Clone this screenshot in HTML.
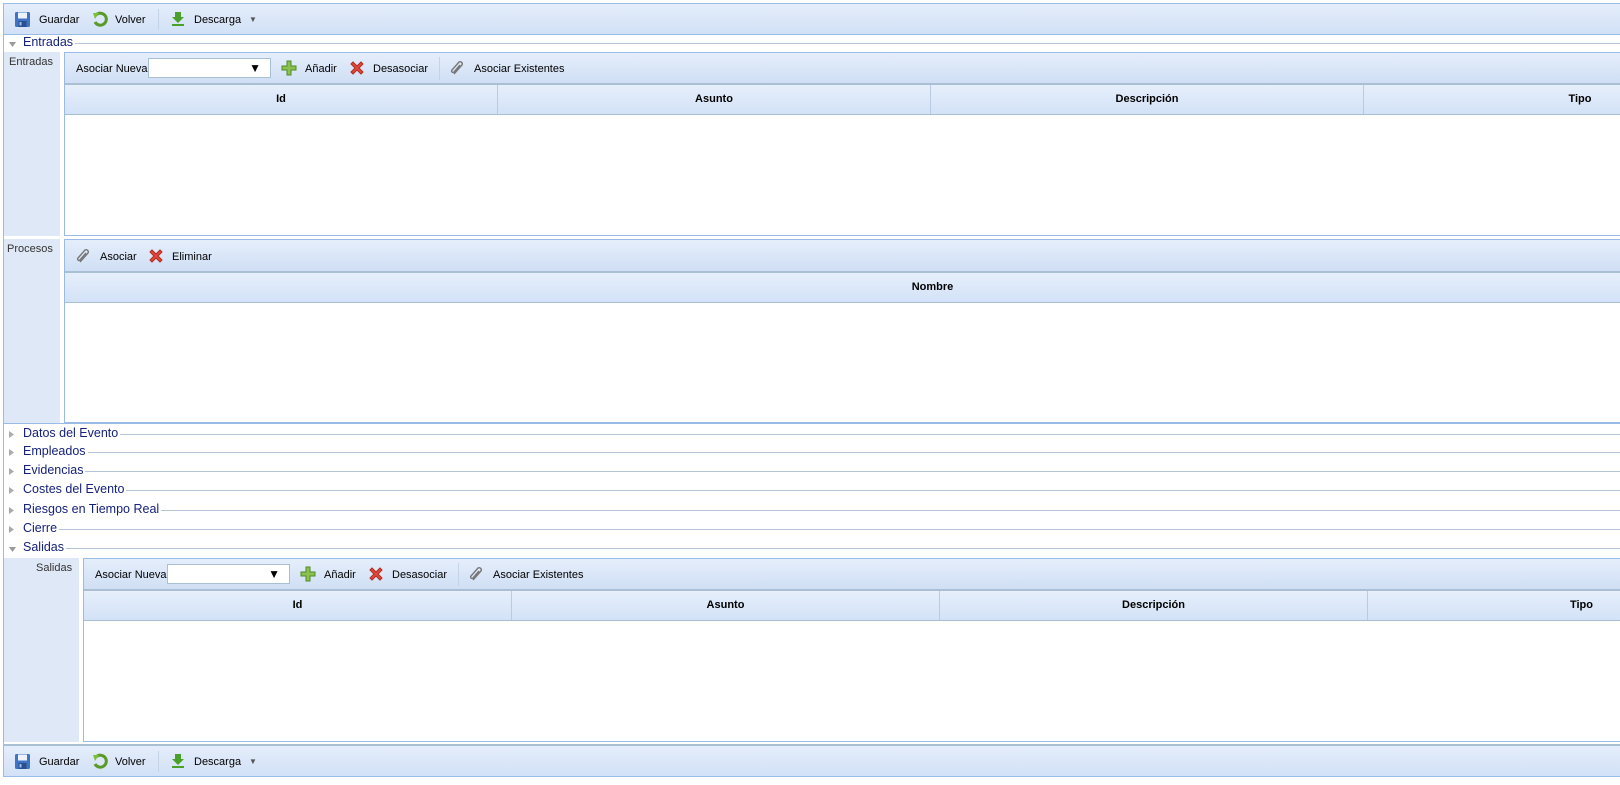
<!DOCTYPE html>
<html><head><meta charset="utf-8">
<style>
*{box-sizing:border-box;margin:0;padding:0}
body{width:1620px;height:785px;background:#fff;font-family:"Liberation Sans",sans-serif;font-size:11px;color:#000;position:relative;overflow:hidden}
.abs{position:absolute}
.tb{background:linear-gradient(#e4edfa,#d2e1f7);border:1px solid #99bbe8}
.mtb{background:linear-gradient(#e5eefb,#d0dff5);border-bottom:1px solid #a9bfd3}
.lbl{position:absolute;white-space:nowrap;line-height:14px}
.sep{position:absolute;width:1px;background:#c5d3e6}
.hdr{position:absolute;background:linear-gradient(#e6effb,#d3e2f7);border-top:1px solid #a9bfd3;border-bottom:1px solid #a9bfd3}
.col{position:absolute;top:0;bottom:0;border-right:1px solid #b8cbe3;text-align:center;font-weight:bold;font-size:11px;line-height:29px}
.sec{position:absolute;left:4px;right:0;height:15px}
.sec .t{position:absolute;left:19px;top:0;color:#15227b;font-size:12.5px;line-height:15px;background:#fff;padding-right:2px}
.sec .ln{position:absolute;left:19px;right:0;top:8px;border-top:1px solid #b5c6d9}
.sec .ar{position:absolute;left:4px;top:4px}
.combo{position:absolute;height:20px;background:#fff;border:1px solid #a9bfd3}
.combo span{position:absolute;right:9px;top:2px;font-size:12px}
.side{position:absolute;background:#dfe8f6}
.panel{position:absolute;border:1px solid #99bbe8;background:#fff;right:-2px}
</style></head><body>

<svg width="0" height="0" style="position:absolute">
<defs>
<g id="save"><rect x="1" y="1" width="15" height="15" rx="1.5" fill="#3f74c4"/><rect x="4" y="1.5" width="9" height="6" fill="#eef3fb"/><rect x="4.5" y="10" width="8" height="6" fill="#2a4f8e"/><rect x="5.5" y="11" width="2" height="3.5" fill="#9fbbe6"/></g>
<g id="back"><path d="M4 4 A6 6 0 1 1 3 11" fill="none" stroke="#5a9a2a" stroke-width="3"/><path d="M1 2 L7 2 L3 8 Z" fill="#7bbf3a"/></g>
<g id="down"><path d="M5 1h6v5h3l-6 6-6-6h3z" fill="#4aa12a"/><rect x="2" y="13" width="12" height="2" fill="#4aa12a"/></g>
<g id="plus"><path d="M6 1h4v5h5v4h-5v5H6v-5H1V6h5z" fill="#8cc152" stroke="#4e8a22" stroke-width="1"/></g>
<g id="del"><path d="M2 4 L4 2 L8 6 L12 2 L14 4 L10 8 L14 12 L12 14 L8 10 L4 14 L2 12 L6 8 Z" fill="#e04a3a" stroke="#b22a1e" stroke-width="1"/></g>
<g id="clip"><path d="M5 14 L13 5 A2.2 2.2 0 0 0 10 2 L3 10 A1.4 1.4 0 0 0 5 12 L11 5" fill="none" stroke="#777" stroke-width="1.4"/></g>
</defs></svg>

<!-- top toolbar -->
<div class="abs tb" style="left:3px;top:3px;right:-2px;height:32px">
 <svg class="abs" style="left:10px;top:7px" width="17" height="17"><use href="#save"/></svg>
 <div class="lbl" style="left:35px;top:9px">Guardar</div>
 <svg class="abs" style="left:88px;top:7px" width="16" height="16"><use href="#back"/></svg>
 <div class="lbl" style="left:111px;top:9px">Volver</div>
 <div class="sep" style="left:154px;top:5px;height:21px"></div>
 <svg class="abs" style="left:166px;top:7px" width="16" height="16"><use href="#down"/></svg>
 <div class="lbl" style="left:190px;top:9px">Descarga</div>
 <div class="lbl" style="left:245px;top:9px;color:#555;font-size:8px">▼</div>
</div>

<div class="abs" style="left:3px;top:35px;width:1px;height:710px;background:#99bbe8"></div>

<div class="sec" style="top:35px"><span class="ar"><svg width="9" height="7"><path d="M1 1h7l-3.5 5z" fill="#999"/></svg></span><div class="ln"></div><div class="t">Entradas</div></div>

<div class="side" style="left:4px;top:52px;width:56px;height:184px"></div>
<div class="lbl" style="left:9px;top:55px;color:#333">Entradas</div>
<div class="panel" style="left:64px;top:52px;height:184px">
 <div class="mtb abs" style="left:0;right:0;top:0;height:31px">
  <div class="lbl" style="left:11px;top:9px">Asociar Nueva</div>
  <div class="combo" style="left:83px;top:5px;width:123px"><span>▼</span></div>
  <svg class="abs" style="left:216px;top:7px" width="16" height="16"><use href="#plus"/></svg>
  <div class="lbl" style="left:240px;top:9px">Añadir</div>
  <svg class="abs" style="left:284px;top:7px" width="16" height="16"><use href="#del"/></svg>
  <div class="lbl" style="left:308px;top:9px">Desasociar</div>
  <div class="sep" style="left:374px;top:4px;height:23px"></div>
  <svg class="abs" style="left:384px;top:7px" width="16" height="16"><use href="#clip"/></svg>
  <div class="lbl" style="left:409px;top:9px">Asociar Existentes</div>
 </div>
 <div class="hdr" style="left:0;right:0;top:31px;height:31px">
  <div class="col" style="left:0;width:433px">Id</div>
  <div class="col" style="left:433px;width:433px">Asunto</div>
  <div class="col" style="left:866px;width:433px">Descripción</div>
  <div class="col" style="left:1299px;width:433px">Tipo</div>
 </div>
</div>

<div class="side" style="left:4px;top:239px;width:56px;height:184px"></div>
<div class="lbl" style="left:7px;top:242px;color:#333">Procesos</div>
<div class="panel" style="left:64px;top:239px;height:184px">
 <div class="mtb abs" style="left:0;right:0;top:0;height:32px">
  <svg class="abs" style="left:10px;top:8px" width="16" height="16"><use href="#clip"/></svg>
  <div class="lbl" style="left:35px;top:10px">Asociar</div>
  <svg class="abs" style="left:83px;top:8px" width="16" height="16"><use href="#del"/></svg>
  <div class="lbl" style="left:107px;top:10px">Eliminar</div>
 </div>
 <div class="hdr" style="left:0;right:0;top:32px;height:31px">
  <div class="col" style="left:0;width:1735px;border:none">Nombre</div>
 </div>
</div>
<div class="abs" style="left:3px;top:423px;right:0;height:1px;background:#99bbe8"></div>

<div class="sec" style="top:426px"><span class="ar"><svg width="7" height="9"><path d="M1 1v7l5-3.5z" fill="#aaa"/></svg></span><div class="ln"></div><div class="t">Datos del Evento</div></div>
<div class="sec" style="top:444px"><span class="ar"><svg width="7" height="9"><path d="M1 1v7l5-3.5z" fill="#aaa"/></svg></span><div class="ln"></div><div class="t">Empleados</div></div>
<div class="sec" style="top:463px"><span class="ar"><svg width="7" height="9"><path d="M1 1v7l5-3.5z" fill="#aaa"/></svg></span><div class="ln"></div><div class="t">Evidencias</div></div>
<div class="sec" style="top:482px"><span class="ar"><svg width="7" height="9"><path d="M1 1v7l5-3.5z" fill="#aaa"/></svg></span><div class="ln"></div><div class="t">Costes del Evento</div></div>
<div class="sec" style="top:502px"><span class="ar"><svg width="7" height="9"><path d="M1 1v7l5-3.5z" fill="#aaa"/></svg></span><div class="ln"></div><div class="t">Riesgos en Tiempo Real</div></div>
<div class="sec" style="top:521px"><span class="ar"><svg width="7" height="9"><path d="M1 1v7l5-3.5z" fill="#aaa"/></svg></span><div class="ln"></div><div class="t">Cierre</div></div>
<div class="sec" style="top:540px"><span class="ar"><svg width="9" height="7"><path d="M1 1h7l-3.5 5z" fill="#999"/></svg></span><div class="ln"></div><div class="t">Salidas</div></div>

<div class="side" style="left:4px;top:558px;width:75px;height:184px"></div>
<div class="lbl" style="left:36px;top:561px;color:#333">Salidas</div>
<div class="panel" style="left:83px;top:558px;height:184px">
 <div class="mtb abs" style="left:0;right:0;top:0;height:31px">
  <div class="lbl" style="left:11px;top:9px">Asociar Nueva</div>
  <div class="combo" style="left:83px;top:5px;width:123px"><span>▼</span></div>
  <svg class="abs" style="left:216px;top:7px" width="16" height="16"><use href="#plus"/></svg>
  <div class="lbl" style="left:240px;top:9px">Añadir</div>
  <svg class="abs" style="left:284px;top:7px" width="16" height="16"><use href="#del"/></svg>
  <div class="lbl" style="left:308px;top:9px">Desasociar</div>
  <div class="sep" style="left:374px;top:4px;height:23px"></div>
  <svg class="abs" style="left:384px;top:7px" width="16" height="16"><use href="#clip"/></svg>
  <div class="lbl" style="left:409px;top:9px">Asociar Existentes</div>
 </div>
 <div class="hdr" style="left:0;right:0;top:31px;height:31px">
  <div class="col" style="left:0;width:428px">Id</div>
  <div class="col" style="left:428px;width:428px">Asunto</div>
  <div class="col" style="left:856px;width:428px">Descripción</div>
  <div class="col" style="left:1284px;width:428px">Tipo</div>
 </div>
</div>

<div class="abs tb" style="left:3px;top:744px;right:-2px;height:33px;border-top:2px solid #a9bfd3">
 <svg class="abs" style="left:10px;top:7px" width="17" height="17"><use href="#save"/></svg>
 <div class="lbl" style="left:35px;top:9px">Guardar</div>
 <svg class="abs" style="left:88px;top:7px" width="16" height="16"><use href="#back"/></svg>
 <div class="lbl" style="left:111px;top:9px">Volver</div>
 <div class="sep" style="left:154px;top:5px;height:21px"></div>
 <svg class="abs" style="left:166px;top:7px" width="16" height="16"><use href="#down"/></svg>
 <div class="lbl" style="left:190px;top:9px">Descarga</div>
 <div class="lbl" style="left:245px;top:9px;color:#555;font-size:8px">▼</div>
</div>
</body></html>
